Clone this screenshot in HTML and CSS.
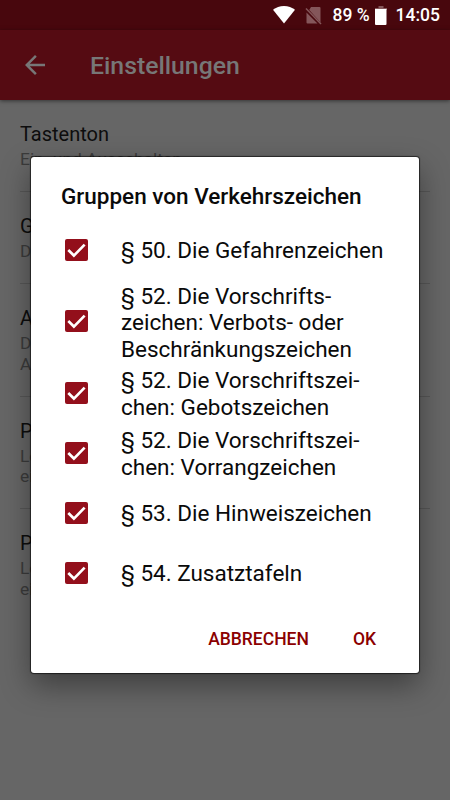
FILE: index.html
```
<!DOCTYPE html>
<html lang="de">
<head>
    <meta charset="UTF-8">
    <meta name="viewport" content="width=device-width, initial-scale=1.0">
    <title>Einstellungen</title>
    <link rel="stylesheet" href="styles.css">
</head>
<body>
    <div class="screen">
        <div class="statusbar-bg"></div>
        <header class="toolbar">
            <svg class="back" viewBox="0 0 24 24"><path d="M20 11H7.83l5.59-5.59L12 4l-8 8 8 8 1.41-1.41L7.83 13H20v-2z"/></svg>
            <h1>Einstellungen</h1>
        </header>

        <main class="settings">
            <div class="setting">
                <h2>Tastenton</h2>
                <p>Ein- und Ausschalten</p>
            </div>
            <div class="setting">
                <h2>Gruppen</h2>
                <p>Die Gruppen</p>
            </div>
            <div class="setting setting-tall">
                <h2>Anzahl</h2>
                <p>Die<br>Anzahl</p>
            </div>
            <div class="setting setting-tall">
                <h2>Punkte</h2>
                <p>Legt<br>ein</p>
            </div>
            <div class="setting">
                <h2>Pause</h2>
                <p>Legt<br>ein</p>
            </div>
        </main>
    </div>

    <div class="statusbar">
        <svg class="wifi" viewBox="0 0 22 18"><path d="M11 17.5 0 3.8C3 1.3 6.800 0 11 0s8 1.300 11 3.800z"/></svg>
        <svg class="nosim" viewBox="0 0 17 19"><path d="M6 1h8.500q1 0 1 1v14.500L4.200 4zM1.500 6.500 12.500 17.500h-10q-1 0-1-1z"/><path class="slash" d="M1 2.500 16 18"/></svg>
        <span class="percent">89 %</span>
        <svg class="battery" viewBox="0 0 12 19"><path class="tip" d="M3.500 0h5v2H12v2H0V2h3.500z"/><path d="M0 3h11.500v15q0 1-1 1H1q-1 0-1-1z"/></svg>
        <span class="clock">14:05</span>
    </div>

    <div class="overlay">
        <div class="dialog">
            <h2 class="dialog-title">Gruppen von Verkehrszeichen</h2>
            <ul class="choices">
                <li class="choice">
                    <svg class="check" viewBox="0 0 22 22"><path d="M3.200 10.800 8.700 16.200 19.200 5.500"/></svg>
                    <span>§ 50. Die Gefahrenzeichen</span>
                </li>
                <li class="choice choice-tall">
                    <svg class="check" viewBox="0 0 22 22"><path d="M3.200 10.800 8.700 16.200 19.200 5.500"/></svg>
                    <span>§ 52. Die Vorschrifts-<br>zeichen: Verbots- oder<br>Beschränkungszeichen</span>
                </li>
                <li class="choice">
                    <svg class="check" viewBox="0 0 22 22"><path d="M3.200 10.800 8.700 16.200 19.200 5.500"/></svg>
                    <span>§ 52. Die Vorschriftszei-<br>chen: Gebotszeichen</span>
                </li>
                <li class="choice">
                    <svg class="check" viewBox="0 0 22 22"><path d="M3.200 10.800 8.700 16.200 19.200 5.500"/></svg>
                    <span>§ 52. Die Vorschriftszei-<br>chen: Vorrangzeichen</span>
                </li>
                <li class="choice">
                    <svg class="check" viewBox="0 0 22 22"><path d="M3.200 10.800 8.700 16.200 19.200 5.500"/></svg>
                    <span>§ 53. Die Hinweiszeichen</span>
                </li>
                <li class="choice">
                    <svg class="check" viewBox="0 0 22 22"><path d="M3.200 10.800 8.700 16.200 19.200 5.500"/></svg>
                    <span>§ 54. Zusatztafeln</span>
                </li>
            </ul>
            <div class="actions">
                <button class="btn">ABBRECHEN</button>
                <button class="btn">OK</button>
            </div>
        </div>
    </div>
</body>
</html>
```
FILE: styles.css
```
* { margin: 0; padding: 0; box-sizing: border-box; }

body {
    font-family: Roboto, sans-serif;
    width: 450px;
    height: 800px;
    overflow: hidden;
    position: relative;
    background: #666;
}

.screen {
    height: 800px;
}

.statusbar-bg {
    height: 30px;
    background: #48070d;
}

.toolbar {
    height: 70px;
    display: flex;
    align-items: center;
    padding-left: 20px;
    background: #550b12;
    box-shadow: 0 1px 4px rgba(0, 0, 0, 0.5);
}

.back {
    width: 30px;
    height: 30px;
    margin-right: 40px;
    fill: #777;
}

.toolbar h1 {
    padding-top: 1px;
    font-size: 24.8px;
    font-weight: 500;
    color: #777;
}

.setting {
    height: 92px;
    margin: 0 20px;
    padding-top: 22px;
    border-bottom: 1px solid #575757;
}

.setting-tall {
    height: 112.5px;
}

.setting:last-child {
    border-bottom: none;
}

.setting h2 {
    font-size: 20px;
    line-height: 24px;
    font-weight: 400;
    color: #0d0d0d;
}

.setting p {
    margin-top: 3px;
    font-size: 17.4px;
    line-height: 20.5px;
    color: #3b3b3b;
}

/* system icons stay bright above the dimmed page */
.statusbar {
    position: absolute;
    top: 0;
    left: 0;
    width: 450px;
    height: 30px;
    z-index: 2;
    display: flex;
    align-items: center;
    justify-content: flex-end;
    padding-right: 10px;
    color: #fff;
    font-size: 17.5px;
    font-weight: 500;
}

.statusbar svg { fill: #fff; }

.wifi {
    width: 22px;
    height: 18px;
    margin-right: 10px;
}

.statusbar .nosim {
    width: 17px;
    height: 19px;
    margin-right: 10px;
    fill: #84565a;
}

.slash {
    stroke: #84565a;
    stroke-width: 1.5;
}

.battery {
    width: 12px;
    height: 19px;
    margin: 0 9px 0 5px;
}

.statusbar .tip { fill: #84565a; }

.overlay {
    position: absolute;
    inset: 0;
    display: flex;
    flex-direction: column;
    align-items: center;
    padding-top: 157px;
}

.dialog {
    width: 388px;
    height: 516px;
    background: #fff;
    border-radius: 3px;
    box-shadow: 0 0 1px 1px rgba(0, 0, 0, 0.6), 0 12px 30px rgba(0, 0, 0, 0.4);
}

.dialog-title {
    padding: 24px 0 0 30px;
    height: 63px;
    font-size: 22.5px;
    line-height: 30px;
    font-weight: 500;
    color: #0a0a0a;
}

.choices { list-style: none; }

.choice {
    height: 60px;
    display: flex;
    align-items: center;
    padding-left: 34px;
    font-size: 22.5px;
    line-height: 26.4px;
    color: #0a0a0a;
}

.choice-tall {
    height: 83px;
    padding-bottom: 1px;
}

.choice span { padding-top: 1px; white-space: nowrap; }

.choice-tall span { padding-top: 3px; }

.check {
    width: 22.5px;
    height: 22.5px;
    margin-right: 33.5px;
    border-radius: 2px;
    background: #930f1b;
    fill: none;
    stroke: #fff;
    stroke-width: 2.6;
}

.actions {
    display: flex;
    justify-content: flex-end;
    gap: 44px;
    padding: 26px 43px 0 0;
}

.btn {
    border: none;
    background: none;
    font-family: inherit;
    font-size: 17.5px;
    line-height: 20px;
    font-weight: 500;
    color: #8b0000;
}
```
